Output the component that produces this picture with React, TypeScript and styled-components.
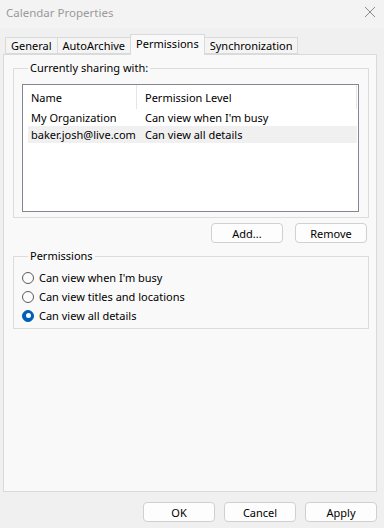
import React from "react";
import styled, { createGlobalStyle } from "styled-components";

const GlobalStyle = createGlobalStyle`
  html, body { margin: 0; padding: 0; background: #f0f0f0; }
  * { box-sizing: border-box; }
  body { font-family: "Noto Sans", "Liberation Sans", sans-serif; font-size: 11px; color: #1a1a1a; }
`;

const Window = styled.div`
  width: 384px;
  height: 528px;
  display: flex;
  flex-direction: column;
  background: #f0f0f0;
  overflow: hidden;
`;

const TitleBar = styled.div`
  height: 28px;
  flex: none;
  display: flex;
  align-items: center;
  justify-content: space-between;
  padding: 0 8px 4px 6px;
  background: #f3f3f3;
  color: #9a9a9a;
  font-size: 11.5px;
`;

const CloseIcon = () => (
  <svg width="12" height="12" viewBox="0 0 12 12">
    <path d="M1 1 L11 11 M11 1 L1 11" stroke="#8a8a8a" strokeWidth="1" fill="none" />
  </svg>
);

const TabStrip = styled.div`
  height: 26px;
  flex: none;
  display: flex;
  align-items: flex-end;
  padding-left: 5px;
`;

const Tab = styled.div<{ $active?: boolean }>`
  height: ${(p) => (p.$active ? "21px" : "17px")};
  margin-bottom: ${(p) => (p.$active ? "-1px" : "0")};
  margin-left: -1px;
  padding: ${(p) => (p.$active ? "0 5px 3px" : "0 5px")};
  position: relative;
  z-index: ${(p) => (p.$active ? 2 : 1)};
  display: flex;
  align-items: center;
  background: ${(p) => (p.$active ? "#f9f9f9" : "#f4f4f4")};
  border: 1px solid #dadada;
  border-bottom: ${(p) => (p.$active ? "none" : "1px solid #dadada")};
  white-space: nowrap;
  color: #000;
  &:first-child { margin-left: 0; }
`;

const Panel = styled.div`
  flex: 1;
  margin: 0 7px 0 3px;
  border: 1px solid #dadada;
  background: #f9f9f9;
  padding: 5px 7px 0 9px;
  display: flex;
  flex-direction: column;
`;

const Group = styled.fieldset<{ $pt: number; $pb: number }>`
  margin: 0;
  border: 1px solid #dcdcdc;
  padding: ${(p) => p.$pt}px 8px ${(p) => p.$pb}px 8px;
  min-width: 0;
`;

const Legend = styled.legend`
  padding: 0 2px;
  margin-left: 6px;
  line-height: 16px;
  color: #000;
`;

const List = styled.div`
  height: 128px;
  margin-right: 1px;
  border: 1px solid #828790;
  background: #fff;
  display: flex;
  flex-direction: column;
`;

const HeaderRow = styled.div`
  height: 24px;
  display: grid;
  grid-template-columns: 114px 220px;
  flex: none;
`;

const HeaderCell = styled.div`
  display: flex;
  align-items: center;
  padding-left: 8px;
  border-right: 1px solid #e5e5e5;
  color: #000;
`;

const Row = styled.div<{ $selected?: boolean }>`
  height: 17px;
  margin: 0 1px 0 5px;
  display: grid;
  grid-template-columns: 109px 1fr;
  align-items: center;
  background: ${(p) => (p.$selected ? "#f0f0f0" : "transparent")};
  color: #000;
`;

const Cell = styled.div`
  padding-left: 3px;
  white-space: nowrap;
`;

const Cell2 = styled.div`
  padding-left: 8px;
  white-space: nowrap;
`;

const ButtonRow = styled.div<{ $gap: number }>`
  display: flex;
  justify-content: flex-end;
  gap: ${(p) => p.$gap}px;
`;

const ListButtons = styled(ButtonRow)`
  margin: 5px 2px 5px 0;
`;

const Button = styled.button`
  width: 72px;
  height: 20px;
  padding: 0;
  border: 1px solid #d0d0d0;
  border-radius: 4px;
  background: #fdfdfd;
  font-family: inherit;
  font-size: 11px;
  color: #000;
  display: flex;
  align-items: center;
  justify-content: center;
`;

const RadioRow = styled.label`
  height: 19px;
  display: flex;
  align-items: center;
  gap: 5px;
  color: #000;
`;

const RadioCircle = styled.span<{ $checked?: boolean }>`
  width: 12px;
  height: 12px;
  border-radius: 50%;
  flex: none;
  border: 1px solid ${(p) => (p.$checked ? "#005fb8" : "#5c5c5c")};
  background: ${(p) => (p.$checked ? "#005fb8" : "#fbfbfb")};
  display: flex;
  align-items: center;
  justify-content: center;
  &::after {
    content: "";
    display: ${(p) => (p.$checked ? "block" : "none")};
    width: 5px;
    height: 5px;
    border-radius: 50%;
    background: #fff;
  }
`;

const Footer = styled.div`
  height: 36px;
  flex: none;
  padding: 10px 7px 0 0;
`;

const Radio = ({ label, checked }: { label: string; checked?: boolean }) => (
  <RadioRow>
    <RadioCircle $checked={checked} />
    {label}
  </RadioRow>
);

export default function App() {
  return (
    <>
      <GlobalStyle />
      <Window>
        <TitleBar>
          <span>Calendar Properties</span>
          <CloseIcon />
        </TitleBar>
        <TabStrip>
          <Tab>General</Tab>
          <Tab>AutoArchive</Tab>
          <Tab $active>Permissions</Tab>
          <Tab>Synchronization</Tab>
        </TabStrip>
        <Panel>
          <Group $pt={8} $pb={5}>
            <Legend>Currently sharing with:</Legend>
            <List>
              <HeaderRow>
                <HeaderCell>Name</HeaderCell>
                <HeaderCell>Permission Level</HeaderCell>
              </HeaderRow>
              <Row>
                <Cell>My Organization</Cell>
                <Cell2>Can view when I'm busy</Cell2>
              </Row>
              <Row $selected>
                <Cell>baker.josh@live.com</Cell>
                <Cell2>Can view all details</Cell2>
              </Row>
            </List>
          </Group>
          <ListButtons $gap={12}>
            <Button>Add...</Button>
            <Button>Remove</Button>
          </ListButtons>
          <Group $pt={4} $pb={3}>
            <Legend>Permissions</Legend>
            <Radio label="Can view when I'm busy" />
            <Radio label="Can view titles and locations" />
            <Radio label="Can view all details" checked />
          </Group>
        </Panel>
        <Footer>
          <ButtonRow $gap={9}>
            <Button>OK</Button>
            <Button>Cancel</Button>
            <Button>Apply</Button>
          </ButtonRow>
        </Footer>
      </Window>
    </>
  );
}
